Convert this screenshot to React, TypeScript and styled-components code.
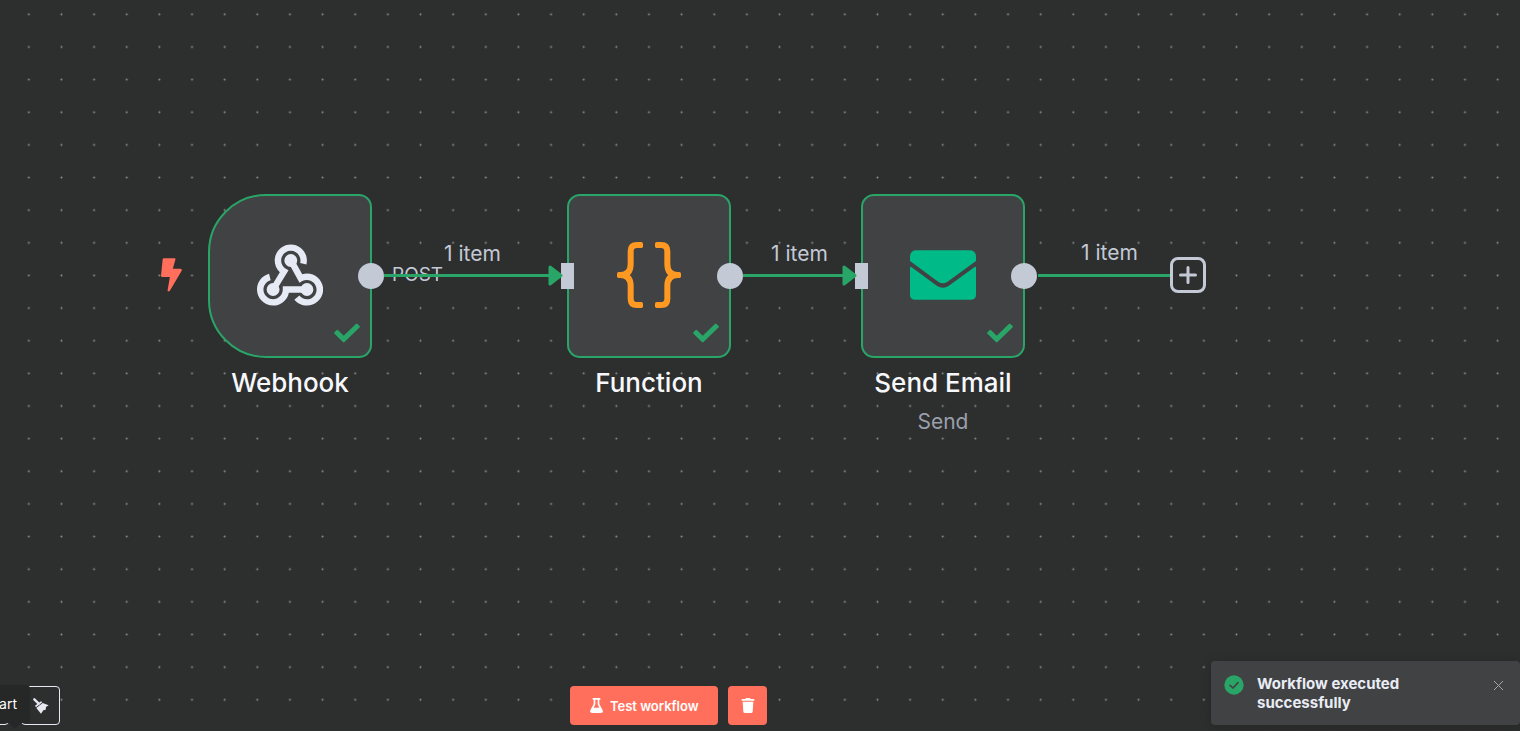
import React from "react";
import styled, { createGlobalStyle } from "styled-components";

const GlobalStyle = createGlobalStyle`
  * { box-sizing: border-box; }
  html, body { margin: 0; padding: 0; background: #2d2e2e; }
  body { font-family: Inter, "Liberation Sans", sans-serif; color: #f2f4f8; overflow: hidden; }
  button { font-family: inherit; margin: 0; cursor: pointer; }
`;

const green = "#29a568";
const coral = "#ff6f5c";
const handle = "#c3c9d5";

const Page = styled.div`
  position: relative;
  display: flex;
  flex-direction: column;
  min-height: 100vh;
  overflow: hidden;
`;

const Grid = styled.svg`
  position: absolute;
  inset: 0;
  width: 100%;
  height: 100%;
`;

const Canvas = styled.main`
  position: relative;
  flex: 1;
`;

const Node = styled.article<{ $x: number; $y: number }>`
  position: absolute;
  left: ${(p) => p.$x}px;
  top: ${(p) => p.$y}px;
  width: 164px;
  display: flex;
  flex-direction: column;
  align-items: center;
  white-space: nowrap;
`;

const NodeBox = styled.div<{ $trigger?: boolean }>`
  position: relative;
  width: 100%;
  height: 164px;
  padding-bottom: 2px;
  display: flex;
  align-items: center;
  justify-content: center;
  background: #414244;
  border: 2px solid ${green};
  border-radius: ${(p) => (p.$trigger ? "58px 13px 13px 58px" : "13px")};
`;

const NodeName = styled.h2`
  margin: 8px 0 0;
  font-size: 26px;
  line-height: 34px;
  font-weight: 500;
  color: #f7f8fb;
`;

const NodeNote = styled.p`
  margin: 9px 0 0;
  font-size: 21px;
  line-height: 26px;
  color: #9a9fac;
`;

const Status = styled.svg`
  position: absolute;
  right: 10px;
  bottom: 13px;
  width: 26px;
  height: 20px;
`;

const Ports = styled.div`
  position: absolute;
  inset: -1px -14px 0 -8px;
  display: flex;
  align-items: center;
`;

const InPort = styled.span`
  width: 13px;
  height: 26px;
  background: ${handle};
`;

const OutPort = styled.span`
  width: 26px;
  height: 26px;
  margin-left: auto;
  border-radius: 50%;
  background: ${handle};
`;

const Bolt = styled.svg`
  position: absolute;
  left: 161px;
  top: 258px;
  width: 21px;
  height: 34px;
`;

const Edges = styled.svg`
  position: absolute;
  inset: 0;
  width: 100%;
  height: 100%;
  pointer-events: none;
`;

const EdgeLabel = styled.span<{ $x: number; $y: number }>`
  position: absolute;
  left: ${(p) => p.$x}px;
  top: ${(p) => p.$y}px;
  font-size: 21px;
  line-height: 26px;
  color: ${handle};
  white-space: nowrap;
`;

const PortLabel = styled(EdgeLabel)`
  font-size: 19px;
`;

const AddButton = styled.button`
  position: absolute;
  left: 1170px;
  top: 257px;
  width: 36px;
  height: 36px;
  padding: 0;
  display: flex;
  align-items: center;
  justify-content: center;
  background: #2d2e2e;
  border: 3px solid ${handle};
  border-radius: 8px;
`;

const Footer = styled.footer`
  position: relative;
  display: grid;
  grid-template-columns: 25fr auto 33fr;
  align-items: end;
  padding-bottom: 6px;
`;

const Tools = styled.div`
  position: relative;
  display: flex;
  gap: 12px;
  margin-left: -30px;
`;

const ToolButton = styled.button`
  width: 39px;
  height: 39px;
  padding: 0;
  display: flex;
  align-items: center;
  justify-content: center;
  background: #2d2e2e;
  border: 1px solid #e6e9f2;
  border-radius: 4px;
`;

const Tooltip = styled.div`
  position: absolute;
  left: 0;
  bottom: 2px;
  width: 60px;
  height: 38px;
  padding-right: 13px;
  text-align: right;
  font-size: 14px;
  line-height: 37px;
  color: #ffffff;
  background: #262727;
  border-radius: 4px;

  &::after {
    content: "";
    position: absolute;
    left: 40px;
    bottom: -4px;
    width: 10px;
    height: 10px;
    background: #262727;
    transform: rotate(45deg);
  }
`;

const Actions = styled.div`
  display: flex;
  gap: 10px;
`;

const ActionButton = styled.button<{ $wide?: boolean }>`
  width: ${(p) => (p.$wide ? 148 : 39)}px;
  height: 39px;
  padding: 0;
  display: flex;
  align-items: center;
  justify-content: center;
  gap: 7px;
  background: ${coral};
  border: 0;
  border-radius: 4px;
  color: #ffffff;
  font-size: 13px;
  line-height: 16px;
  font-weight: 600;
  white-space: nowrap;
`;

const Toast = styled.section`
  justify-self: end;
  display: flex;
  align-items: flex-start;
  gap: 13px;
  width: 309px;
  min-height: 64px;
  padding: 13px 16px 13px 13px;
  background: #414244;
  border-radius: 4px;
  box-shadow: 0 2px 12px rgba(0, 0, 0, 0.2);
`;

const ToastText = styled.p`
  flex: 1;
  margin: 0;
  padding-right: 40px;
  font-size: 15px;
  line-height: 19px;
  font-weight: 700;
  color: #e9ecf5;
`;

const CloseButton = styled.button`
  padding: 6px 0 0;
  display: flex;
  background: none;
  border: 0;
`;

const CheckMark = () => (
  <Status viewBox="0 0 79 58" aria-label="Success">
    <path
      d="M10 23 29.500 42 69 4 75 10 29.500 54 4 29z"
      fill={green}
      stroke={green}
      strokeWidth="7"
      strokeLinejoin="round"
    />
  </Status>
);

const WebhookIcon = () => (
  <svg width="66" height="62" viewBox="4 5 41 38" fill="#e6eaf4">
    <circle cx="35" cy="33" r="4" />
    <circle cx="14" cy="33" r="4" />
    <circle cx="25" cy="15" r="4" />
    <path d="M35 43c-3 0-5.900-1.400-7.800-3.700l3.100-2.500c1.100 1.400 2.900 2.300 4.700 2.300 3.300 0 6-2.700 6-6s-2.700-6-6-6c-1 0-2 .3-2.900.7l-1.700 1L23.300 16l3.500-1.900 5.300 9.400c1-.3 2-.5 3-.5 5.500 0 10 4.500 10 10s-4.600 10-10.100 10" />
    <path d="M14 43C8.500 43 4 38.500 4 33c0-4.600 3.100-8.500 7.500-9.700l1 3.900C9.900 27.900 8 30.300 8 33c0 3.300 2.700 6 6 6s6-2.700 6-6v-2h15v4H23.800c-.9 4.600-5 8-9.800 8" />
    <path d="M15.700 34l-3.400-2 5.900-9.700c-2-1.900-3.200-4.500-3.200-7.300 0-5.500 4.500-10 10-10s10 4.500 10 10c0 .9-.1 1.700-.3 2.500l-3.900-1c.1-.5.2-1 .2-1.500 0-3.300-2.700-6-6-6s-6 2.700-6 6c0 2.100 1.100 4 2.900 5.100l1.700 1z" />
  </svg>
);

const Brace = () => (
  <>
    <path
      d="M72 9H60Q41 9 41 28V66Q41 99 10 99Q41 99 41 132V170Q41 189 60 189H72"
      fill="none"
      stroke="#ff9922"
      strokeWidth="18"
    />
    <rect x="60" y="0" width="18" height="18" rx="5" fill="#ff9922" />
    <rect x="60" y="180" width="18" height="18" rx="5" fill="#ff9922" />
    <rect x="0" y="90" width="22" height="18" rx="5" fill="#ff9922" />
  </>
);

const BracesIcon = () => (
  <svg width="64" height="66" viewBox="0 0 192 198">
    <Brace />
    <g transform="matrix(-1 0 0 1 192 0)">
      <Brace />
    </g>
  </svg>
);

const MailIcon = () => (
  <svg width="66" height="50" viewBox="0 0 197 148" fill="#00bb88">
    <path d="M0 20Q0 0 20 0H177Q197 0 197 20V32L112 94Q98 103 84 94L0 32z" />
    <path d="M0 50Q2 49 5 51L80 106Q98 118 116 106L192 51Q195 49 197 50V132Q197 148 181 148H16Q0 148 0 132z" />
  </svg>
);

const BroomIcon = () => (
  <svg width="16" height="16" viewBox="0 0 48 48">
    <path d="M4 4 17 17" stroke="#e6e9f2" strokeWidth="7" strokeLinecap="round" />
    <path d="M6 23 24 10 28 13 9 28z" fill="#e6e9f2" />
    <path d="M10 30 29 15 47 22 39 27 38 35 31 37 24 47z" fill="#e6e9f2" />
  </svg>
);

const FlaskIcon = () => (
  <svg width="13" height="15" viewBox="0 0 39 45" fill="#ffffff">
    <path
      fillRule="evenodd"
      d="M8 0H31V5H28V18L38 37Q41 45 33 45H6Q-2 45 1 37L11 18V5H8zM16 5V19L11 29H28L23 19V5z"
    />
  </svg>
);

const TrashIcon = () => (
  <svg width="14" height="15" viewBox="0 0 42 45" fill="#ffffff">
    <path d="M2 3H13L15 0H27L29 3H40V8H2zM5 11H37L35 41Q34 45 31 45H11Q8 45 7 41z" />
  </svg>
);

const Arrow = ({ x }: { x: number }) => (
  <path
    d={`M${x - 13} 267 L${x - 2} 275.500 L${x - 13} 284z`}
    fill={green}
    stroke={green}
    strokeWidth="3"
    strokeLinejoin="round"
  />
);

export default function App() {
  return (
    <Page>
      <GlobalStyle />
      <Grid aria-hidden="true">
        <defs>
          <pattern
            id="dots"
            width="20"
            height="20"
            patternUnits="userSpaceOnUse"
            patternTransform="translate(12.500 -2) scale(1.632)"
          >
            <circle cx="10" cy="10" r="0.600" fill="#8f9090" />
          </pattern>
        </defs>
        <rect width="100%" height="100%" fill="url(#dots)" />
      </Grid>

      <Canvas>
        <Bolt viewBox="0 0 64 102" aria-label="Trigger">
          <path
            d="M9 0H41Q45 0 44 4L36 32H60Q65 33 63 38L27 99Q20 104 20 98L27 57H4Q0 57 0 53L5 4Q5 0 9 0z"
            fill={coral}
          />
        </Bolt>

        <Node $x={208} $y={194}>
          <NodeBox $trigger>
            <WebhookIcon />
            <CheckMark />
            <Ports>
              <OutPort />
            </Ports>
          </NodeBox>
          <NodeName>Webhook</NodeName>
        </Node>

        <Node $x={567} $y={194}>
          <NodeBox>
            <BracesIcon />
            <CheckMark />
            <Ports>
              <InPort />
              <OutPort />
            </Ports>
          </NodeBox>
          <NodeName>Function</NodeName>
        </Node>

        <Node $x={861} $y={194}>
          <NodeBox>
            <MailIcon />
            <CheckMark />
            <Ports>
              <InPort />
              <OutPort />
            </Ports>
          </NodeBox>
          <NodeName>Send Email</NodeName>
          <NodeNote>Send</NodeNote>
        </Node>

        <PortLabel $x={392} $y={262}>POST</PortLabel>
        <Edges aria-hidden="true">
          <path d="M384 275.500H552M743 275.500H846M1038 275.500H1170" stroke={green} strokeWidth="3" />
          <Arrow x={563} />
          <Arrow x={857} />
        </Edges>
        <EdgeLabel $x={444} $y={241}>1 item</EdgeLabel>
        <EdgeLabel $x={771} $y={241}>1 item</EdgeLabel>
        <EdgeLabel $x={1081} $y={240}>1 item</EdgeLabel>

        <AddButton aria-label="Add node">
          <svg width="18" height="18" viewBox="0 0 18 18">
            <path d="M9 1.500V16.500M1.500 9H16.500" stroke={handle} strokeWidth="3" strokeLinecap="round" />
          </svg>
        </AddButton>
      </Canvas>

      <Footer>
        <Tools>
          <ToolButton aria-label="Zoom" />
          <ToolButton aria-label="Tidy up">
            <BroomIcon />
          </ToolButton>
          <Tooltip role="tooltip">art</Tooltip>
        </Tools>
        <Actions>
          <ActionButton $wide>
            <FlaskIcon />
            Test workflow
          </ActionButton>
          <ActionButton aria-label="Clear execution">
            <TrashIcon />
          </ActionButton>
        </Actions>
        <Toast role="status">
          <svg width="20" height="22" viewBox="0 0 60 66">
            <circle cx="30" cy="33" r="29" fill={green} />
            <path
              d="M18 34 27 42 42 26"
              fill="none"
              stroke="#414244"
              strokeWidth="5"
              strokeLinecap="round"
              strokeLinejoin="round"
            />
          </svg>
          <ToastText>Workflow executed successfully</ToastText>
          <CloseButton aria-label="Close">
            <svg width="11" height="11" viewBox="0 0 11 11">
              <path d="M1 1 10 10M10 1 1 10" stroke="#a3a5ae" strokeWidth="1" />
            </svg>
          </CloseButton>
        </Toast>
      </Footer>
    </Page>
  );
}
